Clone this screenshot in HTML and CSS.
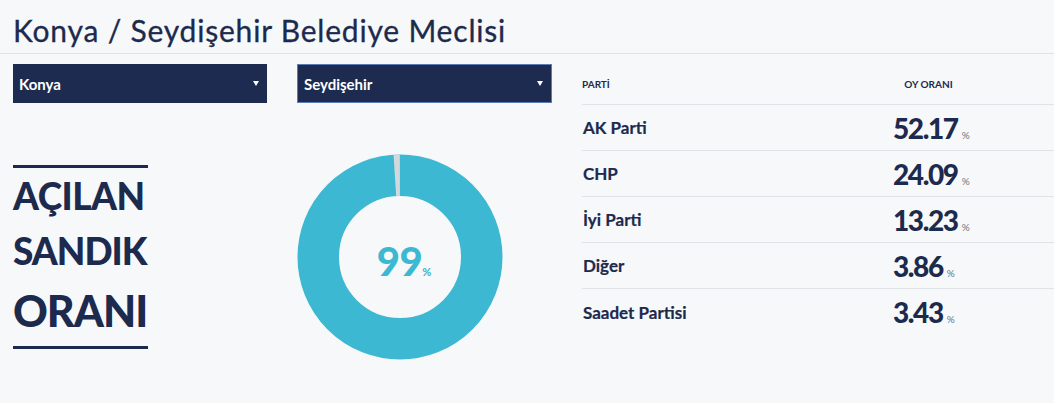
FILE: index.html
```html
<!DOCTYPE html>
<html lang="tr">
<head>
<meta charset="utf-8">
<title>Konya / Seydişehir Belediye Meclisi</title>
<link rel="stylesheet" href="styles.css">
</head>
<body>
<header class="page-head">
  <h1 class="title">Konya / Seydişehir Belediye Meclisi</h1>
</header>
<main class="content">
  <section class="left">
    <div class="selects">
      <div class="select">Konya<span class="arrow"></span></div>
      <div class="select focused">Seydişehir<span class="arrow"></span></div>
    </div>
    <div class="stats">
      <div class="side">
        <div class="side-line s1">AÇILAN</div>
        <div class="side-line s2">SANDIK</div>
        <div class="side-line s3">ORANI</div>
      </div>
      <div class="donut">
        <svg width="206" height="206" viewBox="0 0 206 206">
          <circle cx="103" cy="103" r="81.75" fill="none" stroke="#3db8d2" stroke-width="41.5"/>
          <circle cx="103" cy="103" r="81.75" fill="none" stroke="#d3d8dd" stroke-width="41.5" stroke-dasharray="5.14 600" transform="rotate(-93.6 103 103)"/>
        </svg>
        <div class="donut-label"><span class="big">99</span><span class="pct">%</span></div>
      </div>
    </div>
  </section>
  <section class="results">
    <div class="row head">
      <div class="c-party">PARTİ</div>
      <div class="c-rate">OY ORANI</div>
    </div>
    <div class="row">
      <div class="c-party">AK Parti</div>
      <div class="c-val"><span class="num">52.17</span><span class="unit">%</span></div>
    </div>
    <div class="row">
      <div class="c-party">CHP</div>
      <div class="c-val"><span class="num">24.09</span><span class="unit">%</span></div>
    </div>
    <div class="row">
      <div class="c-party">İyi Parti</div>
      <div class="c-val"><span class="num">13.23</span><span class="unit">%</span></div>
    </div>
    <div class="row">
      <div class="c-party">Diğer</div>
      <div class="c-val"><span class="num">3.86</span><span class="unit">%</span></div>
    </div>
    <div class="row last">
      <div class="c-party">Saadet Partisi</div>
      <div class="c-val"><span class="num">3.43</span><span class="unit">%</span></div>
    </div>
  </section>
</main>
</body>
</html>
```
FILE: styles.css
```css
* { box-sizing: border-box; }
html, body {
  margin: 0;
  padding: 0;
  background: #f7f8fa;
  color: #1c2a4d;
  font-family: "Lato", "Liberation Sans", sans-serif;
}
.page-head {
  height: 54px;
  border-bottom: 1px solid #dfe2e6;
  padding: 6px 0 0 13px;
}
.title {
  margin: 0;
  font-weight: 400;
  font-size: 30px;
  line-height: 48px;
  letter-spacing: 0.8px;
  color: #1c2a4d;
  -webkit-text-stroke: 0.3px #1c2a4d;
}
.content {
  display: flex;
  padding-top: 10px;
}
.left {
  width: 582px;
  padding-left: 13px;
}
.selects {
  display: grid;
  grid-template-columns: 254px 255px;
  column-gap: 30px;
}
.select {
  height: 39px;
  background: #1d2b50;
  color: #fff;
  font-weight: 700;
  font-size: 15px;
  padding-left: 6px;
  display: flex;
  align-items: center;
  justify-content: space-between;
  padding-right: 8px;
}
.select.focused {
  border: 1px solid #5a7bb3;
  padding-left: 6px;
}
.arrow {
  width: 0;
  height: 0;
  border-left: 3px solid transparent;
  border-right: 3px solid transparent;
  border-top: 5px solid #fff;
}
.stats {
  display: grid;
  grid-template-columns: 254px 206px;
  column-gap: 30px;
  align-items: center;
  margin-top: 51px;
}
.side {
  width: 135px;
  border-top: 3px solid #1c2a4d;
  border-bottom: 3px solid #1c2a4d;
  padding: 0 0 3px;
}
.side-line {
  font-weight: 900;
  font-size: 37px;
  line-height: 55px;
  white-space: nowrap;
}
.side-line.s1 { letter-spacing: -0.5px; }
.side-line.s2 { letter-spacing: -1px; }
.side-line.s3 {
  font-size: 43px;
  line-height: 65px;
  letter-spacing: -1px;
}
.donut {
  position: relative;
  width: 206px;
  height: 206px;
}
.donut svg { display: block; }
.donut-label {
  position: absolute;
  left: 0; right: 0; top: 0; bottom: 0;
  display: flex;
  align-items: baseline;
  justify-content: center;
  padding-top: 83px;
  padding-left: 8px;
  color: #3db8d2;
  font-weight: 900;
}
.donut-label .big { font-size: 40px; letter-spacing: -0.5px; }
.donut-label .pct { font-size: 11px; }
.results {
  flex: 1;
}
.row {
  display: flex;
  height: 46px;
  align-items: center;
  border-bottom: 1px solid #dfe2e6;
}
.row.head {
  height: 41px;
}
.row.last { border-bottom: none; }
.c-party {
  width: 221px;
  font-weight: 700;
  font-size: 17px;
  padding-left: 1px;
  -webkit-text-stroke: 0.2px #1c2a4d;
}
.head .c-party {
  font-size: 10px;
  padding-left: 0;
  -webkit-text-stroke: 0;
}
.c-rate {
  flex: 1;
  text-align: center;
  font-weight: 700;
  font-size: 10px;
}
.c-val {
  flex: 1;
  padding-left: 90px;
}
.num {
  font-weight: 900;
  font-size: 28px;
  letter-spacing: -1.4px;
}
.unit {
  font-size: 10px;
  color: #6b7383;
  margin-left: 4px;
}
```
